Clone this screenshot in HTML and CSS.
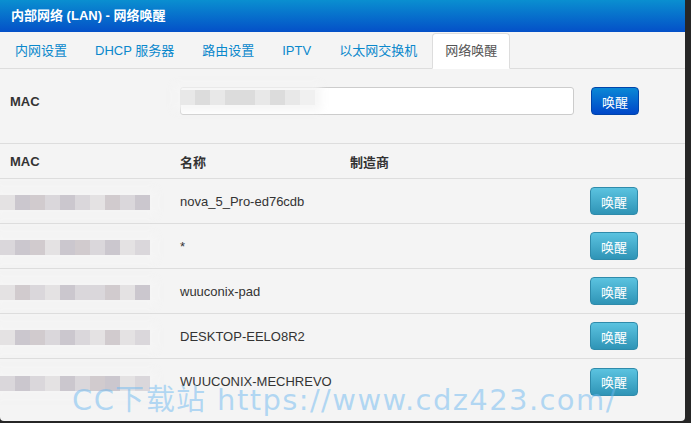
FILE: index.html
```html
<!DOCTYPE html>
<html lang="zh-CN">
<head>
  <meta charset="UTF-8" />
  <title>内部网络 (LAN) - 网络唤醒</title>
  <link rel="stylesheet" href="styles.css">
</head>
<body>

  <div class="panel">
    <div class="panel-head">内部网络 (LAN) - 网络唤醒</div>

    <!-- Onglets -->
    <ul class="nav-tabs">
      <li><a href="#">内网设置</a></li>
      <li><a href="#">DHCP 服务器</a></li>
      <li><a href="#">路由设置</a></li>
      <li><a href="#">IPTV</a></li>
      <li><a href="#">以太网交换机</a></li>
      <li class="active"><a href="#">网络唤醒</a></li>
    </ul>

    <!-- Formulaire -->
    <div class="wol-form">
      <label class="label">MAC</label>
      <div class="input-wrap">
        <input type="text" class="mac-input" />
        <div class="blur blur-input">
          <i class="c2"></i><i class="c1"></i><i class="c2"></i><i class="c1"></i><i class="c1"></i><i class="c2"></i><i class="c1"></i><i class="c2"></i><i class="c3"></i>
        </div>
      </div>
      <button class="btn btn-primary">唤醒</button>
    </div>

    <!-- Liste des clients -->
    <div class="table">
      <div class="row row-head">
        <div>MAC</div>
        <div>名称</div>
        <div>制造商</div>
        <div></div>
      </div>

      <div class="row">
        <div class="blur"><i class="g1"></i><i class="g3"></i><i class="g4"></i><i class="g2"></i><i class="g3"></i><i class="g2"></i><i class="g1"></i><i class="g4"></i><i class="g2"></i><i class="g3"></i></div>
        <div>nova_5_Pro-ed76cdb</div>
        <div></div>
        <button class="btn btn-info">唤醒</button>
      </div>
      <div class="row">
        <div class="blur"><i class="g2"></i><i class="g3"></i><i class="g4"></i><i class="g1"></i><i class="g3"></i><i class="g4"></i><i class="g2"></i><i class="g3"></i><i class="g1"></i><i class="g2"></i></div>
        <div>*</div>
        <div></div>
        <button class="btn btn-info">唤醒</button>
      </div>
      <div class="row">
        <div class="blur"><i class="g1"></i><i class="g4"></i><i class="g2"></i><i class="g1"></i><i class="g3"></i><i class="g2"></i><i class="g2"></i><i class="g4"></i><i class="g1"></i><i class="g3"></i></div>
        <div>wuuconix-pad</div>
        <div></div>
        <button class="btn btn-info">唤醒</button>
      </div>
      <div class="row">
        <div class="blur"><i class="g1"></i><i class="g3"></i><i class="g4"></i><i class="g2"></i><i class="g3"></i><i class="g2"></i><i class="g1"></i><i class="g4"></i><i class="g1"></i><i class="g2"></i></div>
        <div>DESKTOP-EELO8R2</div>
        <div></div>
        <button class="btn btn-info">唤醒</button>
      </div>
      <div class="row">
        <div class="blur"><i class="g2"></i><i class="g3"></i><i class="g2"></i><i class="g1"></i><i class="g3"></i><i class="g2"></i><i class="g4"></i><i class="g3"></i><i class="g1"></i><i class="g2"></i></div>
        <div>WUUCONIX-MECHREVO</div>
        <div></div>
        <button class="btn btn-info">唤醒</button>
      </div>
    </div>

    <div class="watermark">CC下载站 https://www.cdz423.com/</div>
  </div>

</body>
</html>
```

FILE: styles.css
```css
body {
  margin: 0;
  background: #262626;
  font-family: "Liberation Sans", Arial, "Noto Sans CJK SC", sans-serif;
  font-size: 13px;
  color: #333;
}
.panel {
  position: relative;
  width: 685px;
  height: 421px;
  background: #f4f4f4;
  border-radius: 0 0 4px 4px;
  overflow: hidden;
}
.panel-head {
  height: 32px;
  line-height: 32px;
  padding: 0 11px;
  color: #fff;
  font-weight: bold;
  background: linear-gradient(#0a8fd0, #0450c8);
}

/* Onglets */
.nav-tabs {
  display: flex;
  list-style: none;
  margin: 0;
  padding: 1px 0 0 2px;
  border-bottom: 1px solid #ddd;
}
.nav-tabs li {
  margin-right: 2px;
  margin-bottom: -1px;
}
.nav-tabs a {
  display: block;
  padding: 8px 12px;
  line-height: 18px;
  border: 1px solid transparent;
  border-radius: 4px 4px 0 0;
  color: #0a88cc;
  text-decoration: none;
}
.nav-tabs .active a {
  background: #fff;
  border-color: #ddd #ddd transparent;
  color: #555;
}

/* Formulaire */
.wol-form {
  display: grid;
  grid-template-columns: 163px 394px 48px;
  column-gap: 17px;
  align-items: center;
  align-content: start;
  height: 75px;
  box-sizing: border-box;
  padding-top: 18px;
  border-bottom: 1px solid #ddd;
}
.label {
  padding-left: 10px;
  font-weight: bold;
}
.input-wrap {
  position: relative;
  height: 28px;
}
.mac-input {
  width: 100%;
  height: 28px;
  box-sizing: border-box;
  border: 1px solid #ccc;
  border-radius: 3px;
  background: #fff;
}
.blur {
  display: flex;
  margin-top: 3px;
  box-shadow: 0 0 8px 6px rgba(245, 245, 245, 0.9);
  background: rgba(245, 245, 245, 0.9);
  width: 150px;
}
.blur i {
  display: block;
  width: 15px;
  height: 15px;
}
.blur-input {
  position: absolute;
  left: 0;
  top: 0;
  width: 135px;
}
.c1 { background: #dcdcdc; }
.c2 { background: #e8e8e8; }
.c3 { background: #f0f0f0; }
.g1 { background: #e4e2e3; }
.g2 { background: #dad7db; }
.g3 { background: #cbc7ce; }
.g4 { background: #d1cbce; }

/* Boutons */
.btn {
  width: 48px;
  height: 28px;
  padding: 0;
  border-radius: 4px;
  color: #fff;
  font-family: "Noto Sans CJK SC", sans-serif;
  font-size: 13px;
  cursor: pointer;
}
.btn-primary {
  border: 1px solid #0044aa;
  background: linear-gradient(#0a88d6, #0047c9);
}
.btn-info {
  border: 1px solid #2f8bab;
  background: linear-gradient(#5bc3e0, #2f94b6);
  margin-right: 47px;
}

/* Tableau */
.row {
  display: grid;
  grid-template-columns: 180px 170px 1fr auto;
  align-items: center;
  height: 45px;
  box-sizing: border-box;
  border-bottom: 1px solid #ddd;
}
.row:last-child {
  border-bottom: none;
}
.row-head {
  height: 35px;
  font-weight: bold;
}
.row-head div:first-child {
  padding-left: 10px;
}

.watermark {
  position: absolute;
  left: 72px;
  top: 376px;
  font-family: "DejaVu Sans", sans-serif;
  font-size: 29px;
  letter-spacing: 1.4px;
  color: rgba(110, 185, 240, 0.5);
  white-space: nowrap;
}
```
